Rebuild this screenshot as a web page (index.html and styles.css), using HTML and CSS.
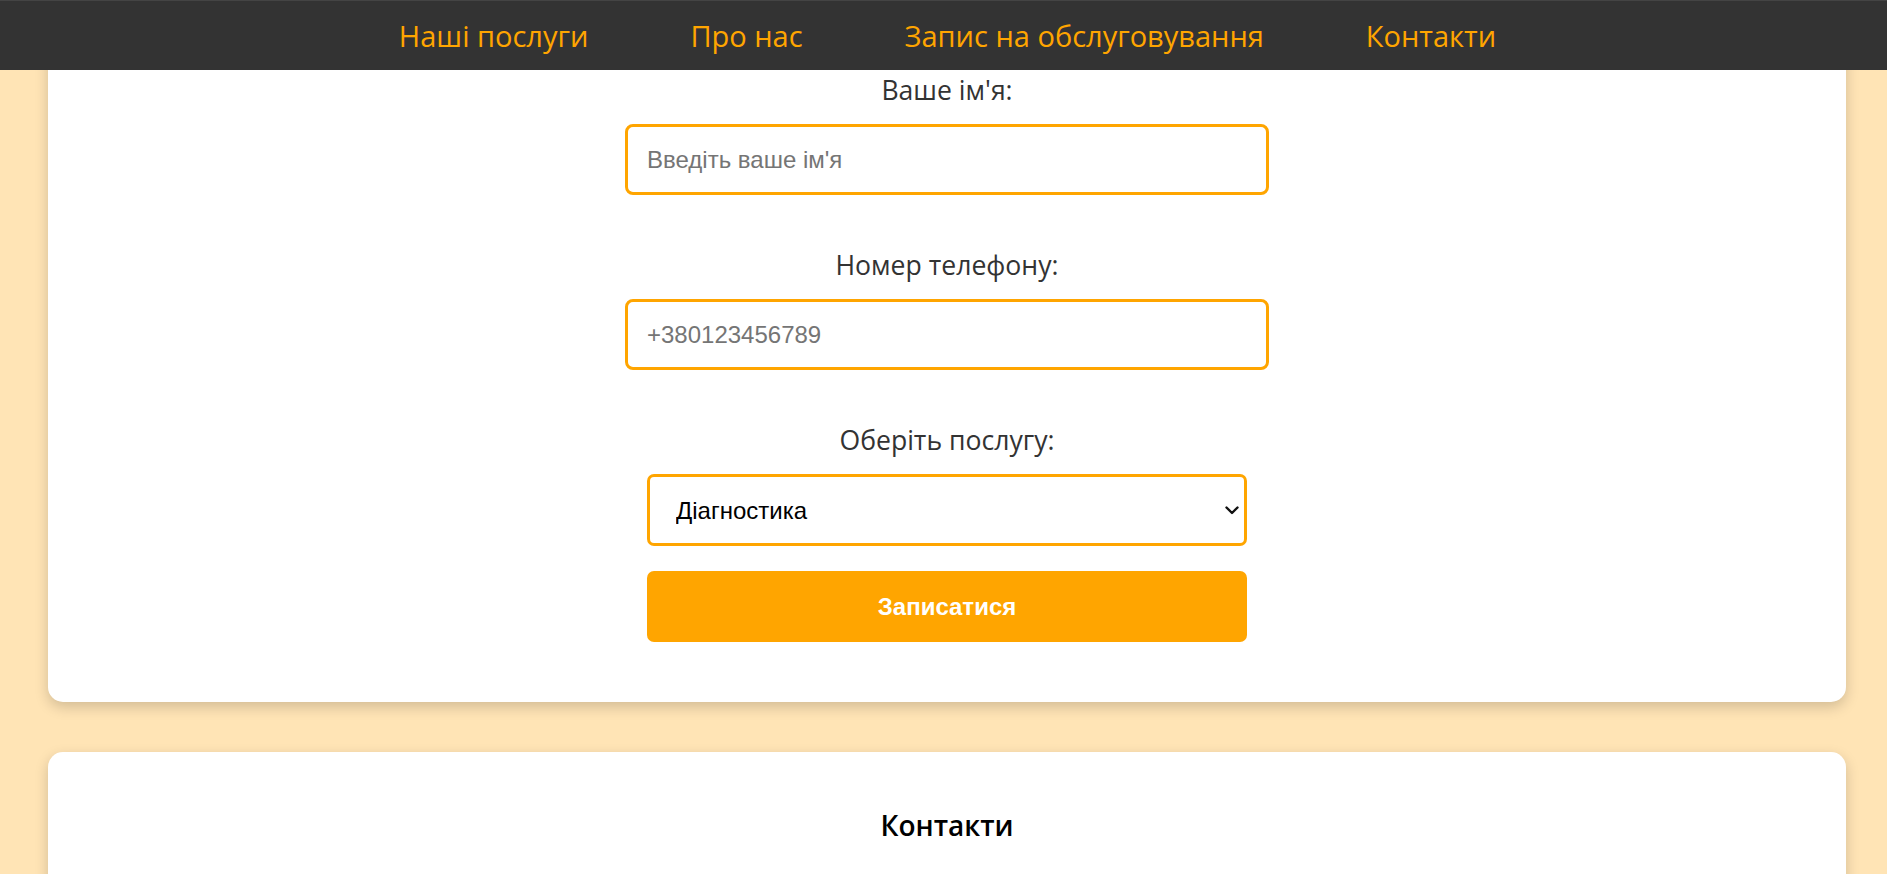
FILE: index.html
```html
<!DOCTYPE html>
<html lang="uk">
<head>
<meta charset="utf-8">
<title>Запис на обслуговування</title>
<link rel="stylesheet" href="styles.css">
</head>
<body>
<nav class="topnav">
  <a class="navlink" href="#services">Наші послуги</a>
  <a class="navlink" href="#about">Про нас</a>
  <a class="navlink" href="#booking">Запис на обслуговування</a>
  <a class="navlink" href="#contacts">Контакти</a>
</nav>
<main class="page">
  <section class="card booking" id="booking">
    <form class="form">
      <label class="label" for="name">Ваше ім'я:</label>
      <input class="field" id="name" type="text" placeholder="Введіть ваше ім'я">
      <label class="label" for="phone">Номер телефону:</label>
      <input class="field" id="phone" type="tel" placeholder="+380123456789">
      <label class="label" for="service">Оберіть послугу:</label>
      <div class="select-wrap">
        <select class="select" id="service">
          <option>Діагностика</option>
          <option>Заміна масла</option>
          <option>Ремонт ходової</option>
        </select>
        <svg class="chevron" width="14" height="9" viewBox="0 0 14 9"><path d="M1.5 1.5 L7 7 L12.5 1.5" fill="none" stroke="#111" stroke-width="2.4" stroke-linecap="round" stroke-linejoin="round"/></svg>
      </div>
      <button class="submit" type="button">Записатися</button>
    </form>
  </section>
  <section class="card contacts" id="contacts">
    <h2 class="heading">Контакти</h2>
  </section>
</main>
</body>
</html>
```
FILE: styles.css
```css
html, body {
  margin: 0;
  padding: 0;
}
body {
  background: #ffe4b5;
  font-family: "Open Sans", "Noto Sans", sans-serif;
  color: #333;
}
.topnav {
  position: fixed;
  top: 0;
  left: 0;
  right: 0;
  height: 70px;
  box-sizing: border-box;
  border-top: 1px solid #444;
  background: #333;
  display: flex;
  justify-content: center;
  align-items: center;
  padding-left: 8px;
  z-index: 10;
}
.navlink {
  color: #ffa500;
  text-decoration: none;
  font-size: 29px;
  padding: 0 51px;
}
.page {
  padding-top: 40px;
  display: flex;
  flex-direction: column;
  gap: 50px;
  padding-left: 48px;
  padding-right: 41px;
}
.card {
  background: #fff;
  border-radius: 15px;
  box-shadow: 0 5px 14px rgba(0, 0, 0, 0.18);
}
.booking {
  padding: 32px 0 60px;
}
.form {
  display: flex;
  flex-direction: column;
  align-items: center;
}
.label {
  font-size: 26.6px;
  line-height: 37px;
  color: #333;
  margin-bottom: 15px;
}
.field {
  box-sizing: border-box;
  width: 644px;
  height: 71px;
  border: 3px solid #ffa500;
  border-radius: 8px;
  padding: 0 18px 0 19px;
  font-family: "Liberation Sans", Arial, sans-serif;
  font-size: 24px;
  color: #000;
  margin: 0 0 52px;
  outline: none;
}
.field::placeholder {
  color: #757575;
}
.select-wrap {
  position: relative;
  width: 600px;
  height: 72px;
}
.select {
  -webkit-appearance: none;
  appearance: none;
  box-sizing: border-box;
  width: 600px;
  height: 72px;
  border: 3px solid #ffa500;
  border-radius: 7px;
  background: #fff;
  padding: 0 24px 0 26px;
  font-family: "Liberation Sans", Arial, sans-serif;
  font-size: 24px;
  color: #000;
  outline: none;
}
.chevron {
  position: absolute;
  right: 8px;
  top: 32px;
  pointer-events: none;
}
.submit {
  margin-top: 25px;
  width: 600px;
  height: 71px;
  border: none;
  border-radius: 7px;
  background: #ffa500;
  color: #fff;
  font-family: "Liberation Sans", Arial, sans-serif;
  font-weight: bold;
  font-size: 24px;
  cursor: pointer;
}
.contacts {
  padding: 54px 0 120px;
  text-align: center;
}
.heading {
  margin: 0;
  font-size: 28px;
  font-weight: 600;
  color: #000;
  line-height: normal;
}
```
